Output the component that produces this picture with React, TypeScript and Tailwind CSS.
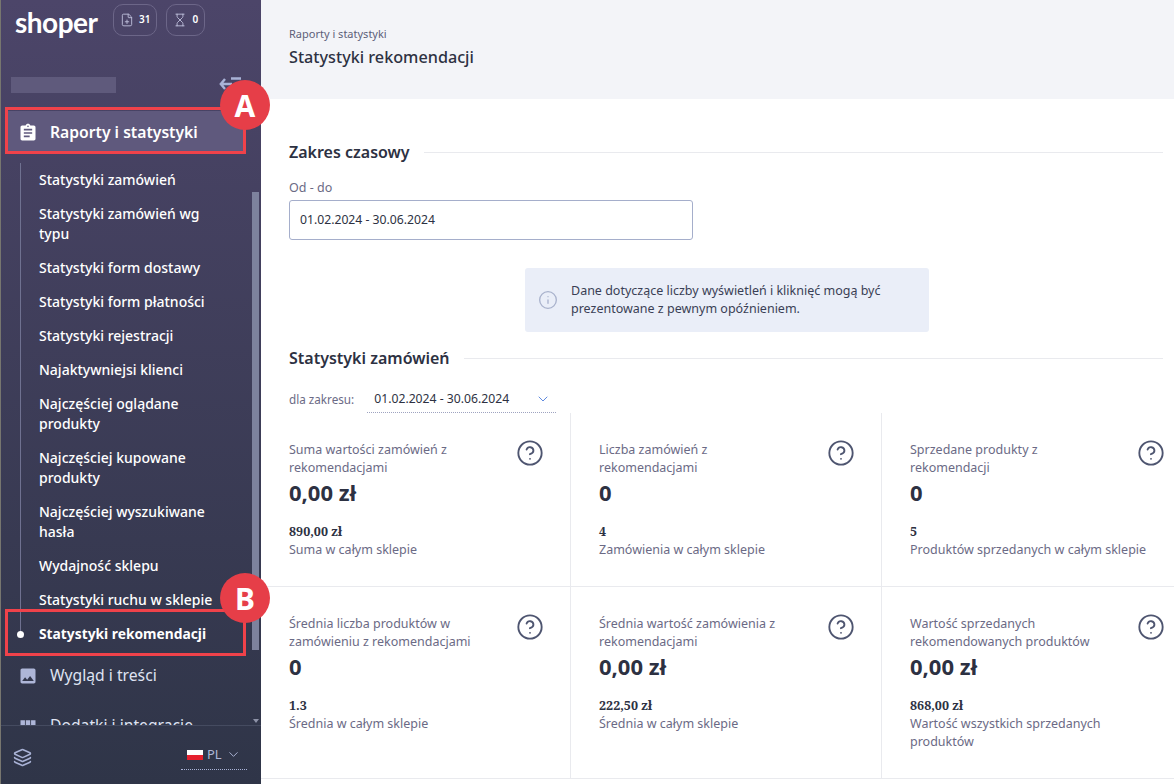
import React from 'react';
import { Layers, ChevronDown, Info, FilePlus, Hourglass, CircleHelp } from 'lucide-react';
import { MdAssignment, MdPhoto, MdViewModule } from 'react-icons/md';

const font = { fontFamily: '"Noto Sans", sans-serif' };

type SubItem = { label: string; active?: boolean };

const subItems: SubItem[] = [
  { label: 'Statystyki zamówień' },
  { label: 'Statystyki zamówień wg typu' },
  { label: 'Statystyki form dostawy' },
  { label: 'Statystyki form płatności' },
  { label: 'Statystyki rejestracji' },
  { label: 'Najaktywniejsi klienci' },
  { label: 'Najczęściej oglądane produkty' },
  { label: 'Najczęściej kupowane produkty' },
  { label: 'Najczęściej wyszukiwane hasła' },
  { label: 'Wydajność sklepu' },
  { label: 'Statystyki ruchu w sklepie' },
  { label: 'Statystyki rekomendacji', active: true },
];

const stats = [
  { title: 'Suma wartości zamówień z rekomendacjami', value: '0,00 zł', total: '890,00 zł', note: 'Suma w całym sklepie' },
  { title: 'Liczba zamówień z rekomendacjami', value: '0', total: '4', note: 'Zamówienia w całym sklepie' },
  { title: 'Sprzedane produkty z rekomendacji', value: '0', total: '5', note: 'Produktów sprzedanych w całym sklepie' },
  { title: 'Średnia liczba produktów w zamówieniu z rekomendacjami', value: '0', total: '1.3', note: 'Średnia w całym sklepie' },
  { title: 'Średnia wartość zamówienia z rekomendacjami', value: '0,00 zł', total: '222,50 zł', note: 'Średnia w całym sklepie' },
  { title: 'Wartość sprzedanych rekomendowanych produktów', value: '0,00 zł', total: '868,00 zł', note: 'Wartość wszystkich sprzedanych produktów' },
];

const Callout = ({ letter, className }: { letter: string; className: string }) => (
  <div className={`absolute flex h-[50px] w-[50px] items-center justify-center rounded-full bg-[#e63e48] text-[30px] font-bold text-white ${className}`}>
    {letter}
  </div>
);

const Badge = ({ icon, count }: { icon: React.ReactNode; count: string }) => (
  <div className="flex h-[32px] items-center gap-[5px] rounded-[10px] border border-[#6c6688] px-[6px] text-[10px] font-semibold text-white">
    {icon}
    <span>{count}</span>
  </div>
);

const Sidebar = () => (
  <aside className="relative flex h-[784px] w-[261px] shrink-0 flex-col overflow-hidden border-l border-[#77766f] bg-gradient-to-b from-[#4c4569] to-[#2f3548]">
    <div className="flex h-[39px] items-center pl-[14px]">
      <span className="relative top-[2px] w-[98px] text-[28px] font-bold leading-none tracking-[-0.5px] text-white" style={{ fontFamily: 'Lato, sans-serif' }}>shoper</span>
      <div className="flex gap-[9px]">
        <Badge icon={<FilePlus size={14} strokeWidth={1.5} className="text-[#c3c5e0]" />} count="31" />
        <Badge icon={<Hourglass size={14} strokeWidth={1.5} className="text-[#c3c5e0]" />} count="0" />
      </div>
    </div>

    <div className="flex h-[71px] items-start justify-between pl-[10px] pr-[20px] pt-[38px]">
      <div className="h-[16px] w-[105px] bg-[#5f5a7c]" />
      <svg width="22" height="14" viewBox="0 0 22 14" fill="none" stroke="#a9b2d6" strokeWidth="2.4">
        <path d="M6 2 1.8 7 6 12M2 7h11M12 1.5h10" />
      </svg>
    </div>

    <div className="relative min-h-0 flex-1 overflow-hidden pl-[5px] pr-[17px]">
      <div className="mt-[1px] flex h-[42px] items-center gap-[12px] rounded-r-[4px] bg-[#5f597d] pl-[12px] pt-[1px] text-[15.7px] font-semibold text-white">
        <MdAssignment size={20} />
        Raporty i statystyki
      </div>

      <div className="relative mt-[10px] text-[14px] leading-[20px] text-white">
        <div className="absolute bottom-[16px] left-[14px] top-0 w-px bg-[#6f7190]" />
        {subItems.map((item) => (
          <div key={item.label} className={`relative py-[7px] pl-[33px] ${item.active ? 'text-[13.8px] font-bold' : 'font-medium'}`}>
            {item.active && <span className="absolute left-[11px] top-[14px] h-[7px] w-[7px] rounded-full bg-white" />}
            <span className="block max-w-[185px]">{item.label}</span>
          </div>
        ))}
      </div>

      <div className="mt-[4px] flex h-[42px] items-center gap-[12px] pl-[12px] text-[15.7px] text-[#dfe3f2]">
        <MdPhoto size={20} className="text-[#aeb6d8]" />
        Wygląd i treści
      </div>
      <div className="mt-[8px] flex h-[42px] items-center gap-[12px] pl-[12px] text-[15.7px] text-[#dfe3f2]">
        <MdViewModule size={20} className="text-[#aeb6d8]" />
        Dodatki i integracje
      </div>

      <div className="absolute right-[2px] top-[82px] h-[458px] w-[7px] bg-[#7d829d]" />
      <div className="absolute bottom-[2px] right-[2px] h-0 w-0 border-x-[3px] border-t-[4px] border-x-transparent border-t-[#8e93a8]" />
    </div>

    <div className="flex h-[59px] shrink-0 items-start justify-between border-t border-[#454b60] pl-[12px] pr-[14px] pt-[14px]">
      <Layers size={19} strokeWidth={2} className="mt-[8px] text-[#a9b2d6]" />
      <div className="flex h-[30px] w-[66px] items-center gap-[4px] border-b border-dotted border-[#a9b2d6] pl-[6px] text-[13px] text-[#aeb6d8]">
        <span className="flex h-[10px] w-[16px] flex-col overflow-hidden">
          <span className="h-1/2 bg-white" />
          <span className="h-1/2 bg-[#e5202e]" />
        </span>
        PL
        <ChevronDown size={15} strokeWidth={1.5} />
      </div>
    </div>

    <div className="absolute left-[4px] top-[107px] h-[47px] w-[241px] border-[3px] border-[#f0424a]" />
    <div className="absolute left-[4px] top-[609px] h-[47px] w-[241px] border-[3px] border-[#f0424a]" />
  </aside>
);

const SectionTitle = ({ children }: { children: string }) => (
  <div className="flex w-[874px] items-center gap-[14px]">
    <h2 className="text-[16px] font-semibold leading-[22px] text-[#2d3142]">{children}</h2>
    <div className="h-px flex-1 bg-[#e9eaee]" />
  </div>
);

const StatCard = ({ title, value, total, note }: { title: string; value: string; total: string; note: string }) => (
  <div className="h-[174px] border-b border-r border-[#e9eaee] pl-[28px] pr-[26px] pt-[28px] [&:nth-child(n+4)]:h-[192px]">
    <div className="flex items-start justify-between">
      <p className="h-[36px] w-[190px] text-[12.5px] leading-[18px] text-[#6b6a85]">{title}</p>
      <CircleHelp size={28} strokeWidth={1.6} className="-mt-[2px] text-[#4e5570]" />
    </div>
    <p className="text-[22px] font-bold leading-[30px] text-[#2d3142]">{value}</p>
    <p className="mt-[16px] text-[12.5px] font-bold leading-[18px] text-[#2d3142]" style={{ fontFamily: '"Noto Serif", "Liberation Serif", serif' }}>{total}</p>
    <p className="text-[12.5px] leading-[18px] text-[#6b6a85]">{note}</p>
  </div>
);

export default function App() {
  return (
    <div className="relative flex h-[784px] w-[1174px] overflow-hidden bg-white" style={font}>
      <Sidebar />
      <main className="min-w-0 flex-1 overflow-hidden">
        <header className="h-[99px] bg-[#f3f4f8] pl-[28px] pt-[26px]">
          <p className="text-[11px] leading-[16px] text-[#5d5f78]">Raporty i statystyki</p>
          <h1 className="mt-[3px] text-[16.2px] font-medium leading-[24px] text-[#2d3142]">Statystyki rekomendacji</h1>
        </header>

        <div className="pl-[28px] pr-[11px] pt-[42px]">
          <SectionTitle>Zakres czasowy</SectionTitle>
          <label className="mt-[15px] block text-[12.5px] leading-[20px] text-[#6b6a85]">Od - do</label>
          <div className="mt-[2px] flex h-[40px] w-[404px] items-center rounded-[3px] border border-[#a5aecb] pl-[10px] text-[12.2px] text-[#2d3142]">
            01.02.2024 - 30.06.2024
          </div>

          <div className="ml-[236px] mt-[28px] flex h-[64px] w-[404px] items-center gap-[13px] rounded-[3px] bg-[#eaeef8] pl-[13px] pr-[20px] text-[12.5px] leading-[18px] text-[#3a3f55]">
            <Info size={20} strokeWidth={1.6} className="shrink-0 text-[#a9b2cc]" />
            <p>Dane dotyczące liczby wyświetleń i kliknięć mogą być prezentowane z pewnym opóźnieniem.</p>
          </div>

          <div className="mt-[15px]">
            <SectionTitle>Statystyki zamówień</SectionTitle>
          </div>

          <div className="mt-[17px] flex items-center gap-[13px]">
            <span className="text-[11.7px] text-[#6b6a85]">dla zakresu:</span>
            <div className="flex h-[27px] w-[189px] items-center justify-between border-b border-dotted border-[#9ea3c0] pl-[7px] pr-[5px] text-[12.2px] text-[#2d3142]">
              01.02.2024 - 30.06.2024
              <ChevronDown size={16} strokeWidth={1.5} className="text-[#5f8ae0]" />
            </div>
          </div>

          <div className="-ml-[28px] grid w-[931px] grid-cols-[310px_311px_310px]">
            {stats.map((s) => (
              <StatCard key={s.title} {...s} />
            ))}
          </div>
        </div>
      </main>
      <Callout letter="A" className="left-[220px] top-[80px]" />
      <Callout letter="B" className="left-[220px] top-[573px]" />
    </div>
  );
}
